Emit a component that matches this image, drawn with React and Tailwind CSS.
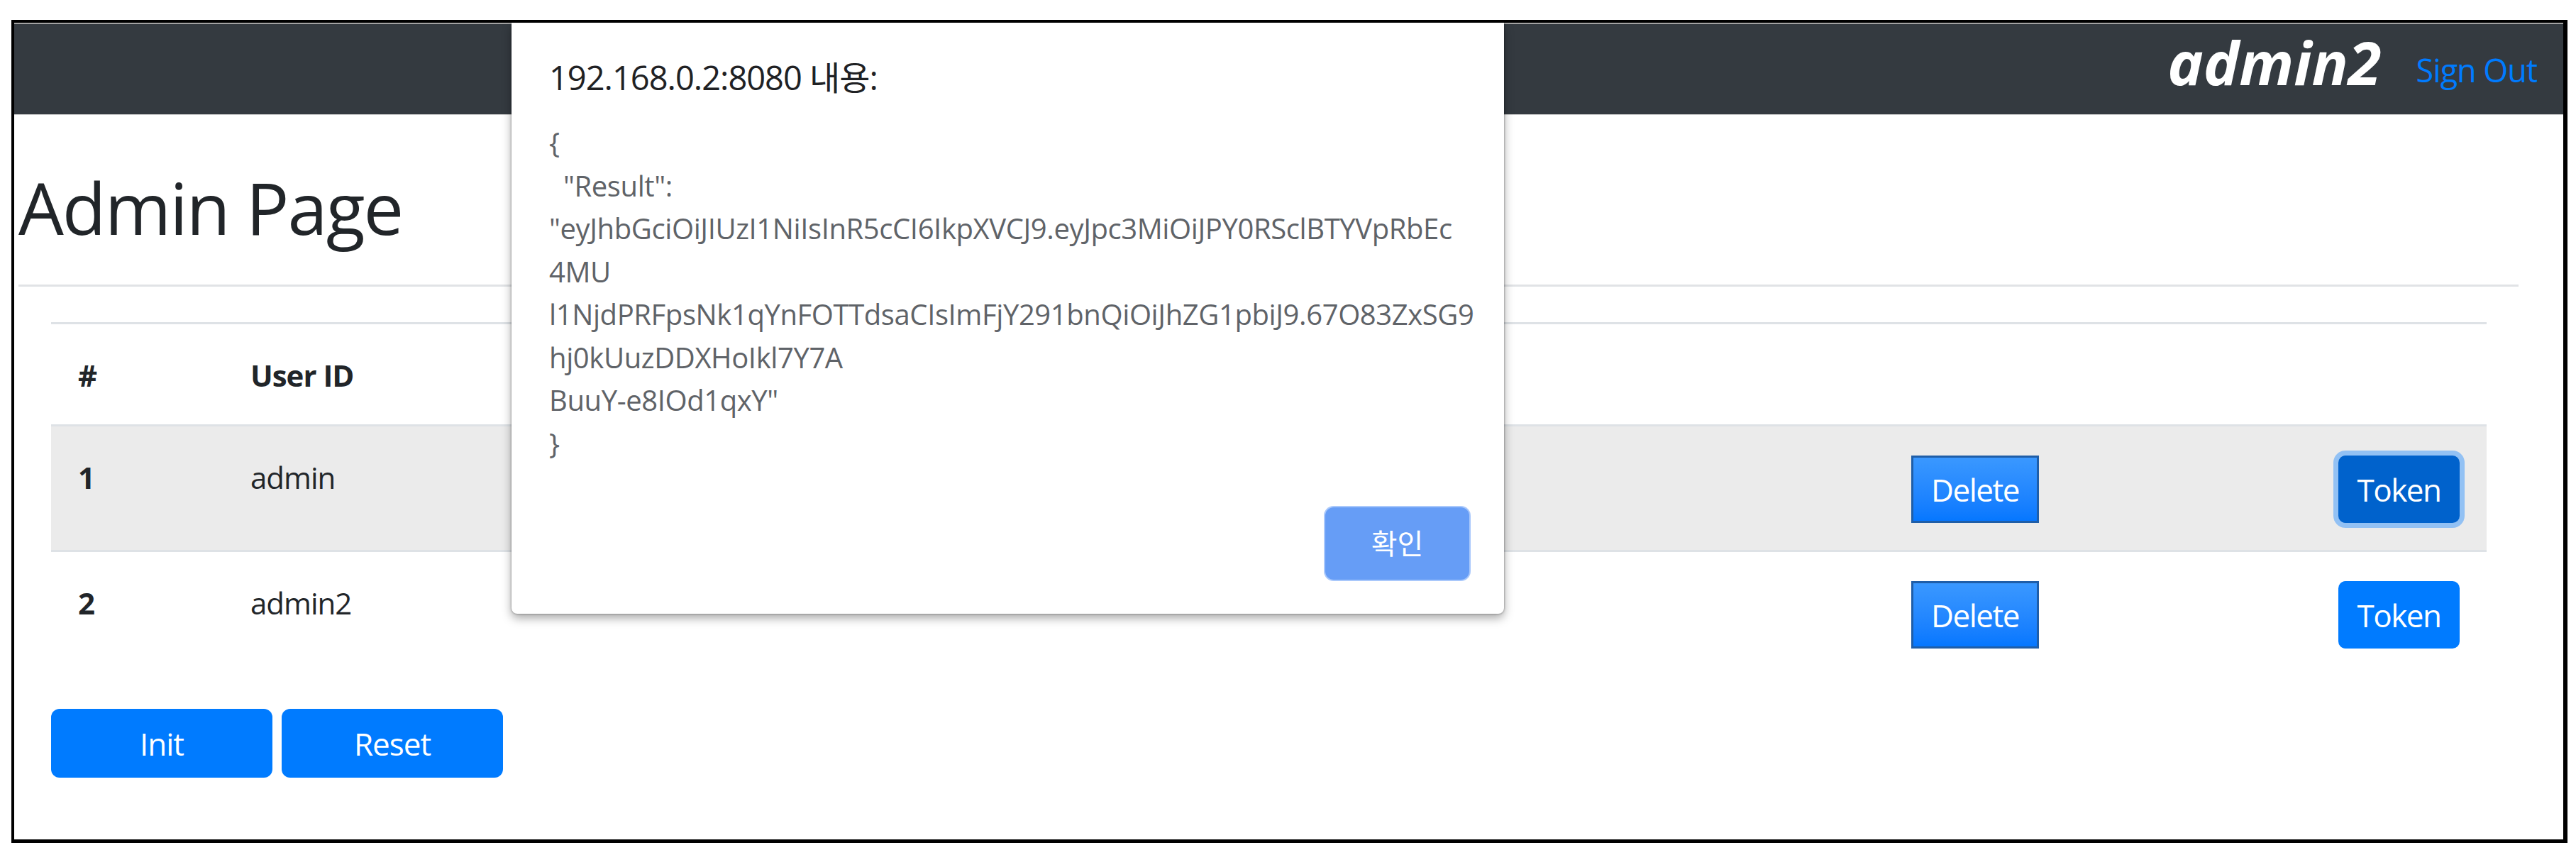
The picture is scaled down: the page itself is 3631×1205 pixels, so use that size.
import React from "react";

const font = "font-['Open_Sans','Noto_Sans_CJK_KR',sans-serif]";

const resultLines = [
  "{",
  '  "Result":',
  '"eyJhbGciOiJIUzI1NiIsInR5cCI6IkpXVCJ9.eyJpc3MiOiJPY0RSclBTYVpRbEc',
  "4MU",
  "l1NjdPRFpsNk1qYnFOTTdsaCIsImFjY291bnQiOiJhZG1pbiJ9.67O83ZxSG9",
  "hj0kUuzDDXHoIkl7Y7A",
  'BuuY-e8IOd1qxY"',
  "}",
];

const users = [
  { no: 1, id: "admin", focused: true },
  { no: 2, id: "admin2", focused: false },
];

function DeleteButton() {
  return (
    <button className="w-[180px] h-[95px] mt-[1px] border-[3px] border-[#1f5ea8] bg-linear-to-b from-[#3a98ff] to-[#0577ff] text-white text-[44px] tracking-[-1.5px] leading-none">
      Delete
    </button>
  );
}

function TokenButton({ focused }) {
  return (
    <button
      className={
        focused
          ? "w-[171px] h-[95px] mt-[1px] rounded-[10px] bg-[#0062cc] text-white text-[44px] tracking-[-1.5px] leading-none shadow-[0_0_0_7px_rgba(38,143,255,0.45)]"
          : "w-[171px] h-[95px] mt-[1px] rounded-[10px] bg-[#007bff] text-white text-[44px] tracking-[-1.5px] leading-none"
      }
    >
      Token
    </button>
  );
}

function Dialog() {
  return (
    <div className="absolute left-[701px] top-0 w-[1399px] h-[833px] bg-white rounded-b-[8px] shadow-[0_6px_14px_rgba(0,0,0,0.35),0_0_3px_rgba(0,0,0,0.45)] flex flex-col">
      <div className="pl-[53px] pt-[45px]">
        <div className="text-[47px] leading-[64px] tracking-[-1px] text-[#202124]">
          192.168.0.2:8080 내용:
        </div>
        <div className="mt-[30px] text-[40px] leading-[60.5px] tracking-[-0.4px] text-[#5f6368] whitespace-pre">
          {resultLines.map((line, i) => (
            <div key={i}>{line}</div>
          ))}
        </div>
      </div>
      <div className="mt-auto flex justify-end pr-[49px] pb-[48px]">
        <button className="w-[203px] h-[102px] rounded-[12px] bg-[#669df6] text-white text-[40px] leading-none shadow-[0_0_0_2px_#a9c8fb]">
          확인
        </button>
      </div>
    </div>
  );
}

export default function App() {
  return (
    <div className={`w-[3631px] h-[1205px] bg-white pt-[28px] pl-[16px] ${font}`}>
      <div className="relative w-[3603px] h-[1160px] border-black border-t-4 border-l-4 border-r-[6px] border-b-[5px] overflow-hidden">
        <nav className="h-[130px] bg-[#343a40] border-t-2 border-[#a3a3a3] border-b border-b-[#cfcfcf] flex justify-end items-start pr-[37px]">
          <span className="mt-[11px] text-[85px] leading-[85px] font-bold italic text-white">admin2</span>
          <a className="ml-[49px] mt-[42px] text-[45px] leading-[45px] tracking-[-1px] text-[#007bff]">Sign Out</a>
        </nav>

        <div className="pl-[6px] pr-[63px]">
          <h1 className="mt-[70px] text-[101px] leading-[121px] font-medium tracking-[-2px] text-[#212529]">
            Admin Page
          </h1>
          <hr className="mt-[48px] border-0 h-[3px] bg-[#e1e3e6]" />

          <div className="mt-[50px] ml-[46px] mr-[45px] text-[42px] leading-[64px] tracking-[-1px] text-[#212529]">
            <div className="flex h-[144px] pt-[40px] border-t-[3px] border-[#dee2e6] font-bold">
              <div className="w-[243px] pl-[38px]">#</div>
              <div className="w-[2341px] pl-[38px]">User ID</div>
            </div>
            {users.map((u) => (
              <div
                key={u.no}
                className={
                  u.focused
                    ? "flex h-[177px] pt-[40px] border-t-[3px] border-[#dee2e6] bg-[#ebebeb]"
                    : "flex h-[177px] pt-[40px] border-t-[3px] border-[#dee2e6]"
                }
              >
                <div className="w-[243px] pl-[38px] font-bold">{u.no}</div>
                <div className="w-[2341px] pl-[38px]">{u.id}</div>
                <div className="w-[602px] pl-[38px]">
                  <DeleteButton />
                </div>
                <div className="w-[247px] pl-[38px]">
                  <TokenButton focused={u.focused} />
                </div>
              </div>
            ))}
          </div>

          <div className="mt-[47px] ml-[46px] flex gap-[13px]">
            <button className="w-[312px] h-[97px] rounded-[12px] bg-[#007bff] text-white text-[44px] tracking-[-1px] leading-none">
              Init
            </button>
            <button className="w-[312px] h-[97px] rounded-[12px] bg-[#007bff] text-white text-[44px] tracking-[-1px] leading-none">
              Reset
            </button>
          </div>
        </div>

        <Dialog />
      </div>
    </div>
  );
}
